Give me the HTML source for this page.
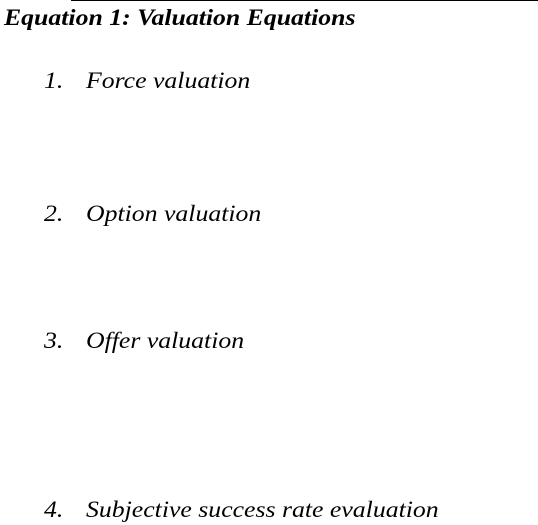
<!DOCTYPE html>
<html><head><style>
html,body{margin:0;padding:0;background:#fff;width:538px;height:525px;overflow:hidden;position:relative;font-family:"Liberation Serif",serif;color:#000}
.line{position:absolute;left:71px;top:0;width:467px;height:1px;background:#000}
.h{position:absolute;left:4px;top:5px;font-size:23px;font-weight:bold;font-style:italic;white-space:nowrap;line-height:26px;transform:scaleX(1.12);transform-origin:left}
.n,.t{position:absolute;font-size:23px;font-style:italic;line-height:26px;white-space:nowrap;transform:scaleX(1.12);transform-origin:left}
.n{left:44px}.t{left:86px}
</style></head><body>
<div class="line"></div>
<div class="h">Equation 1: Valuation Equations</div>
<div class="n" style="top:68px">1.</div><div class="t" style="top:68px">Force valuation</div>
<div class="n" style="top:201px">2.</div><div class="t" style="top:201px">Option valuation</div>
<div class="n" style="top:328px">3.</div><div class="t" style="top:328px">Offer valuation</div>
<div class="n" style="top:497px">4.</div><div class="t" style="top:497px">Subjective success rate evaluation</div>
</body></html>
